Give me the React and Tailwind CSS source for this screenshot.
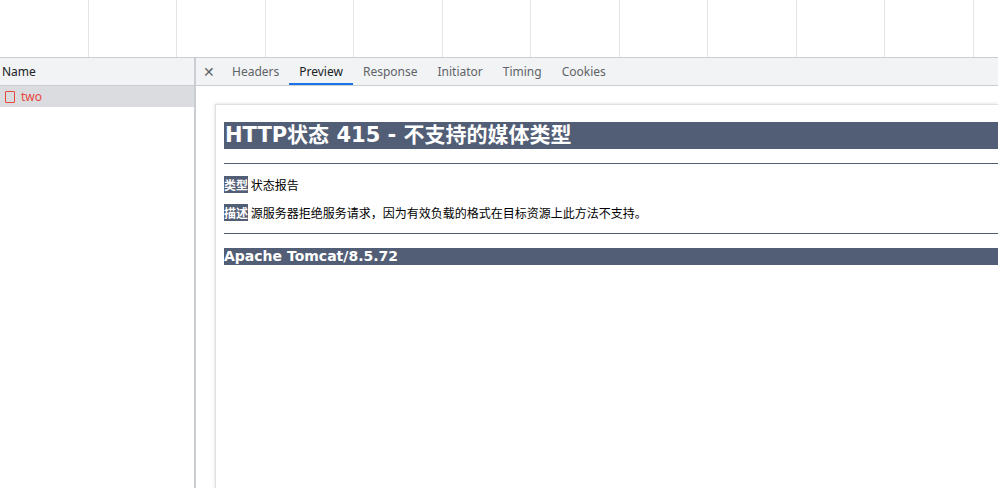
import React from "react";

const cols = Array.from({ length: 12 });
const tabs = ["Headers", "Preview", "Response", "Initiator", "Timing", "Cookies"];
const cjk = { fontFamily: '"Noto Sans CJK SC", sans-serif' };
const tahoma = { fontFamily: '"DejaVu Sans", "Noto Sans CJK SC", sans-serif' };

export default function App() {
  return (
    <div className="w-[998px] h-[488px] overflow-hidden bg-white flex flex-col text-[#333]" style={{ fontFamily: '"Noto Sans", "Noto Sans CJK SC", sans-serif' }}>
      <div className="h-[58px] shrink-0 flex border-b border-[#cacdd1]">
        {cols.map((_, i) => (
          <div key={i} className="w-[88.5px] shrink-0 border-r border-[#e4e4e4]" />
        ))}
      </div>
      <div className="flex flex-1 min-h-0">
        <div className="w-[196px] shrink-0 border-r-2 border-[#cacdd1] flex flex-col">
          <div className="h-[28px] bg-[#f1f3f4] border-b border-[#cacdd1] flex items-center pl-[2px] text-[12px] text-[#202124]">Name</div>
          <div className="h-[21px] bg-[#dadce0] flex items-center pl-[5px] gap-[6px] text-[12px] text-[#e8453c]">
            <span className="w-[10px] h-[12px] border border-[#e8453c] rounded-[1px]" />
            two
          </div>
        </div>
        <div className="flex-1 flex flex-col min-w-0">
          <div className="h-[28px] bg-[#f1f3f4] border-b border-[#cacdd1] flex items-stretch text-[12px] text-[#5f6368]">
            <span className="w-[26px] flex items-center justify-center text-[14px] text-[#5f6368]">✕</span>
            {tabs.map((t) => (
              <span key={t} className={`px-[10px] flex items-center ${t === "Preview" ? "border-b-2 border-[#1a73e8] text-[#202124] pt-[2px]" : ""}`}>{t}</span>
            ))}
          </div>
          <div className="flex-1 pt-[18px] pl-[19px]">
            <div className="h-full bg-white border-l border-t border-[#e0e0e0] shadow-[0_0_3px_rgba(0,0,0,0.15)] pl-[8px] pt-[17px]">
              <h1 className="bg-[#525d76] text-white font-bold text-[21px] leading-[27px] pl-[1px]" style={tahoma}>HTTP状态 415 - 不支持的媒体类型</h1>
              <hr className="mt-[14px] border-t border-[#525d76]" />
              <p className="mt-[13px] text-[12px] leading-[16px] text-black" style={cjk}>
                <span className="bg-[#525d76] text-white font-bold">类型</span> 状态报告
              </p>
              <p className="mt-[12px] text-[12px] leading-[16px] text-black" style={cjk}>
                <span className="bg-[#525d76] text-white font-bold">描述</span> 源服务器拒绝服务请求，因为有效负载的格式在目标资源上此方法不支持。
              </p>
              <hr className="mt-[12px] border-t border-[#525d76]" />
              <h3 className="mt-[14px] bg-[#525d76] text-white font-bold text-[14px] leading-[17px]" style={tahoma}>Apache Tomcat/8.5.72</h3>
            </div>
          </div>
        </div>
      </div>
    </div>
  );
}
